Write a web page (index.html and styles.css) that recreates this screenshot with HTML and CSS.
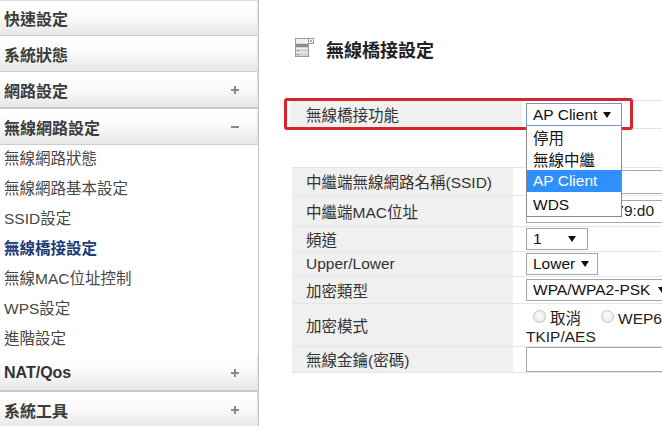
FILE: index.html
```html
<!DOCTYPE html>
<html lang="zh-Hant">
<head>
<meta charset="utf-8">
<title>無線橋接設定</title>
<link rel="stylesheet" href="styles.css">
</head>
<body>
<div class="page">
  <nav class="side">
    <div class="hd first">快速設定</div>
    <div class="hd">系統狀態</div>
    <div class="hd gap">網路設定<svg class="ico" width="8" height="8" viewBox="0 0 8 8"><rect x="3" y="0" width="2" height="8" fill="#8a8a8a"/><rect x="0" y="3" width="8" height="2" fill="#8a8a8a"/></svg></div>
    <div class="hd">無線網路設定<svg class="ico" width="8" height="8" viewBox="0 0 8 8"><rect x="0" y="3" width="8" height="2" fill="#8a8a8a"/></svg></div>
    <ul class="sub">
      <li>無線網路狀態</li>
      <li>無線網路基本設定</li>
      <li>SSID設定</li>
      <li class="active">無線橋接設定</li>
      <li>無線MAC位址控制</li>
      <li>WPS設定</li>
      <li>進階設定</li>
    </ul>
    <div class="hd gap latin">NAT/Qos<svg class="ico" width="8" height="8" viewBox="0 0 8 8"><rect x="3" y="0" width="2" height="8" fill="#8a8a8a"/><rect x="0" y="3" width="8" height="2" fill="#8a8a8a"/></svg></div>
    <div class="hd">系統工具<svg class="ico" width="8" height="8" viewBox="0 0 8 8"><rect x="3" y="0" width="2" height="8" fill="#8a8a8a"/><rect x="0" y="3" width="8" height="2" fill="#8a8a8a"/></svg></div>
  </nav>

  <main class="main">
    <h1 class="title">
      <svg class="title-ico" width="20" height="19" viewBox="0 0 20 19">
        <rect x="0.5" y="0.5" width="13" height="18" fill="#d4d4d4" stroke="#9a9a9a"/>
        <rect x="1" y="1" width="12" height="4" fill="#f2f2f2"/>
        <rect x="1" y="6" width="12" height="3" fill="#8c8c8c"/>
        <line x1="1" y1="10.5" x2="13" y2="10.5" stroke="#f0f0f0"/>
        <line x1="1" y1="14.5" x2="13" y2="14.5" stroke="#f0f0f0"/>
        <rect x="2" y="12" width="2" height="1" fill="#888"/>
        <rect x="2" y="16" width="2" height="1" fill="#888"/>
        <rect x="13.5" y="0.5" width="5" height="5" fill="#f4f4f4" stroke="#9a9a9a"/>
        <rect x="15" y="2" width="2" height="2" fill="#aaa"/>
      </svg>
      <span class="title-text">無線橋接設定</span>
    </h1>

    <div class="bridge">
      <div class="lbl">無線橋接功能</div>
      <div class="val">
        <div class="sel sel-focus sel-ap"><span>AP Client</span><svg width="8" height="6" viewBox="0 0 8 6"><path d="M0 0H8L4 6Z" fill="#111"/></svg></div>
      </div>
    </div>

    <div class="table">
      <div class="row r-ssid">
        <div class="lbl">中繼端無線網路名稱(SSID)</div>
        <div class="val"><div class="inp"></div></div>
      </div>
      <div class="row r-mac">
        <div class="lbl">中繼端MAC位址</div>
        <div class="val"><div class="inp inp-mac">00:e0:4c:86:79:d0</div></div>
      </div>
      <div class="row r-25">
        <div class="lbl">頻道</div>
        <div class="val"><div class="sel sel-ch"><span>1</span><svg width="8" height="6" viewBox="0 0 8 6"><path d="M0 0H8L4 6Z" fill="#111"/></svg></div></div>
      </div>
      <div class="row r-25">
        <div class="lbl">Upper/Lower</div>
        <div class="val"><div class="sel sel-lw"><span>Lower</span><svg width="8" height="6" viewBox="0 0 8 6"><path d="M0 0H8L4 6Z" fill="#111"/></svg></div></div>
      </div>
      <div class="row r-27">
        <div class="lbl">加密類型</div>
        <div class="val"><div class="sel sel-wpa"><span>WPA/WPA2-PSK</span><svg width="8" height="6" viewBox="0 0 8 6"><path d="M0 0H8L4 6Z" fill="#111"/></svg></div></div>
      </div>
      <div class="row r-mode">
        <div class="lbl">加密模式</div>
        <div class="val val-col">
          <div class="radios"><span class="radio"></span><span>取消</span><span class="radio r2"></span><span>WEP64位元</span></div>
          <div class="line2">TKIP/AES</div>
        </div>
      </div>
      <div class="row r-27 last">
        <div class="lbl">無線金鑰(密碼)</div>
        <div class="val"><div class="inp inp-key"></div></div>
      </div>
    </div>

    <div class="mark"></div>

    <ul class="dd">
      <li>停用</li>
      <li>無線中繼</li>
      <li class="on">AP Client</li>
      <li class="end">WDS</li>
    </ul>
  </main>
</div>
</body>
</html>
```

FILE: styles.css
```css
* { box-sizing: border-box; }

body {
  margin: 0;
  width: 662px;
  height: 426px;
  overflow: hidden;
  background: #fff;
  color: #333;
  font-family: "Liberation Sans", "Noto Sans CJK TC", sans-serif;
}

.page {
  display: flex;
  height: 426px;
}

/* ---------- sidebar ---------- */
.side {
  width: 259px;
  flex: none;
  border-right: 1px solid #c6c6c6;
}

.hd {
  height: 36px;
  display: flex;
  align-items: center;
  justify-content: space-between;
  padding: 0 18px 0 4px;
  font-size: 16px;
  font-weight: bold;
  color: #3c3c3c;
  background: linear-gradient(#ffffff 0%, #fbfbfb 45%, #e7e7e7 100%);
  border-bottom: 1px solid #cfcfcf;
  border-right: 1px solid #e2e2e2;
}

.hd.first { border-top: 1px solid #dcdcdc; }

.hd.gap {
  height: 37px;
  border-bottom: 2px solid #c9c9c9;
}

.hd.latin { color: #333; }

.ico { flex: none; }

.sub {
  list-style: none;
  margin: 0;
  padding: 0;
}

.sub li {
  height: 30px;
  line-height: 28px;
  padding-left: 4px;
  font-size: 15.5px;
  color: #474747;
}

.sub li.active {
  color: #1d3b78;
  font-weight: bold;
}

/* ---------- main ---------- */
.main {
  flex: 1;
  position: relative;
  padding-left: 31px;
  overflow: hidden;
}

.title {
  display: flex;
  align-items: flex-start;
  gap: 11px;
  margin: 38px 0 0 5px;
  height: 24px;
  font-size: 18px;
  font-weight: bold;
  color: #222;
}

.title-ico { flex: none; }

.title-text { line-height: 24px; padding-top: 1px; }

.bridge {
  margin-top: 38px;
  width: 620px;
  height: 29px;
  display: flex;
  border-top: 1px solid #e3e3e3;
  border-bottom: 1px solid #e3e3e3;
  font-size: 15.5px;
}

.bridge .lbl {
  width: 232px;
  flex: none;
  background: #f0f0f0;
  padding: 0 0 2px 16px;
  display: flex;
  align-items: center;
}

.bridge .val {
  padding-left: 4px;
  display: flex;
  align-items: center;
}

.sel {
  height: 23px;
  display: flex;
  align-items: center;
  justify-content: space-between;
  padding: 0 9px 0 6px;
  border: 1px solid #a6a6a6;
  background: #fff;
  font-size: 15.5px;
  color: #111;
  white-space: nowrap;
}

.sel-focus { border-color: #7393c9; }
.sel-ap { width: 96px; padding-right: 10px; }
.sel-ch { width: 62px; height: 22px; padding-right: 11px; }
.sel-lw { width: 72px; height: 22px; padding-right: 8px; }
.sel-wpa { width: 150px; height: 22px; }

.table {
  margin: 38px 0 0 2px;
  width: 620px;
  font-size: 15.5px;
}

.row {
  display: flex;
  border-top: 1px solid #e6e6e6;
}

.row.last { border-bottom: 1px solid #e6e6e6; }

.row .lbl {
  width: 221px;
  flex: none;
  background: #f0f0f0;
  padding: 0 0 1px 14px;
  display: flex;
  align-items: center;
  color: #333;
}

.row .val {
  flex: 1;
  padding-left: 13px;
  display: flex;
  align-items: center;
}

.r-ssid { height: 28px; }
.r-mac { height: 31px; }
.r-25 { height: 25px; }
.r-27 { height: 27px; }
.r-mode { height: 43px; }

.inp {
  width: 300px;
  height: 24px;
  border: 1px solid #a9a9a9;
  background: #fff;
  padding-left: 3px;
  line-height: 22px;
  color: #222;
  white-space: nowrap;
}

.inp-mac { height: 23px; line-height: 19px; }
.inp-key { height: 25px; }

.val-col {
  flex-direction: column;
  align-items: flex-start !important;
  justify-content: flex-start;
  padding-top: 4px;
}

.radios {
  display: flex;
  align-items: center;
  height: 20px;
  padding: 0 0 3px 7px;
  gap: 4px;
  white-space: nowrap;
  color: #222;
}

.radio {
  width: 13px;
  height: 13px;
  border-radius: 50%;
  border: 1px solid #c4c4c4;
  background: radial-gradient(circle at 50% 40%, #fefefe 0%, #efefef 55%, #d9d9d9 100%);
  flex: none;
}

.radio.r2 { margin-left: 16px; }

.line2 {
  height: 18px;
  line-height: 18px;
  color: #222;
}

/* annotation box */
.mark {
  position: absolute;
  left: 25px;
  top: 98px;
  width: 349px;
  height: 32px;
  border: 3px solid #d8252c;
  border-radius: 3px;
}

/* open dropdown list */
.dd {
  position: absolute;
  left: 267px;
  top: 126px;
  width: 96px;
  margin: 0;
  padding: 0;
  list-style: none;
  background: #fff;
  border: 1px solid #8a8a8a;
  border-top: none;
  font-size: 15.5px;
  color: #111;
}

.dd li {
  height: 22px;
  line-height: 22px;
  padding: 2px 0 0 6px;
  white-space: nowrap;
}

.dd li.end { height: 24px; }

.dd li.on {
  background: #2f8ffb;
  color: #fff;
  padding-top: 0;
}
```
